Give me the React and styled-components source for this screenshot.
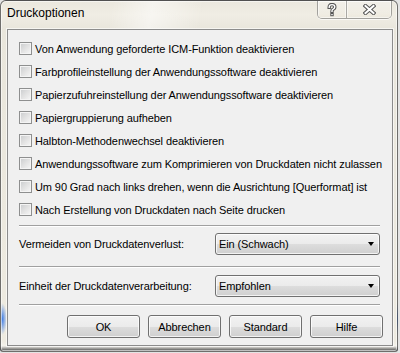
import React from "react";
import styled, { createGlobalStyle } from "styled-components";

const Global = createGlobalStyle`
  html, body { margin: 0; padding: 0; background: #e4e4e4; }
  body { font-family: "Liberation Sans", Arial, sans-serif; }
  * { box-sizing: border-box; }
`;

const Window = styled.div`
  width: 398px;
  height: 352px;
  border: 1px solid rgba(70, 70, 70, 0.75);
  border-radius: 6px 6px 3px 3px;
  padding: 0 4px 5px 6px;
  display: flex;
  flex-direction: column;
  background:
    radial-gradient(ellipse 5px 16px at 1px 318px, rgba(40, 110, 230, 0.9), rgba(40, 110, 230, 0) 100%),
    linear-gradient(to bottom, rgba(0,0,0,0) 340px, rgba(255,255,255,0.4) 345px, rgba(90,90,90,0.9) 349px, rgba(160,160,160,0.8) 352px),
    linear-gradient(100deg, rgba(255,255,255,0) 110px, rgba(255,255,255,0.5) 150px, rgba(255,255,255,0) 200px),
    linear-gradient(to bottom, #ebe8de 0px, #f0ede4 14px, #e9e6dc 28px, #eeebe1 100%);
  box-shadow: inset 0 0 0 1px rgba(255, 255, 255, 0.55);
`;

const TitleBar = styled.div`
  height: 28px;
  display: flex;
  align-items: flex-start;
  flex-shrink: 0;
`;

const Title = styled.div`
  padding-top: 5px;
  font-size: 12px;
  line-height: 15px;
  color: #000;
`;

const CaptionGroup = styled.div`
  margin-left: auto;
  margin-right: 1px;
  display: flex;
  height: 18px;
  border: 1px solid rgba(100, 100, 100, 0.55);
  border-top: none;
  border-radius: 0 0 5px 5px;
  overflow: hidden;
  box-shadow: 0 1px 0 rgba(255, 255, 255, 0.7);
`;

const CaptionButton = styled.div`
  width: ${(p) => p.$w}px;
  height: 100%;
  display: flex;
  align-items: center;
  justify-content: center;
  background: linear-gradient(to bottom, rgba(255,255,255,0.35), rgba(255,255,255,0.15) 50%, rgba(230,225,210,0.3) 100%);
  box-shadow: inset 0 0 0 1px rgba(255, 255, 255, 0.5);
  & + & { border-left: 1px solid rgba(100, 100, 100, 0.5); }
`;

const Client = styled.div`
  flex: 1;
  background: #f0f0f0;
  border: 1px solid #8c8c8c;
  box-shadow: 0 0 0 1px rgba(255, 255, 255, 0.6);
  display: flex;
  flex-direction: column;
  font-size: 11px;
  letter-spacing: -0.1px;
  color: #000;
`;

const CheckList = styled.div`
  padding: 7px 0 0 11px;
  display: flex;
  flex-direction: column;
`;

const CheckRow = styled.label`
  height: 23px;
  display: flex;
  align-items: center;
  gap: 3px;
  white-space: nowrap;
`;

const Box = styled.span`
  width: 13px;
  height: 13px;
  flex-shrink: 0;
  border: 1px solid #8e8f8f;
  background: linear-gradient(135deg, #c9cbcd 0%, #e2e2e2 50%, #f7f7f7 100%);
  box-shadow: inset 0 0 0 1px #f4f4f4;
`;

const Separator = styled.div`
  margin: ${(p) => p.$top}px 12px 0 11px;
  height: 2px;
  border-top: 1px solid #a0a0a0;
  border-bottom: 1px solid #ffffff;
`;

const OptionRow = styled.div`
  margin-top: ${(p) => p.$top}px;
  padding-left: 11px;
  display: flex;
  align-items: center;
`;

const OptionLabel = styled.span`
  width: 196px;
  white-space: nowrap;
`;

const Select = styled.div`
  width: 165px;
  height: 22px;
  border: 1px solid #707070;
  border-radius: 3px;
  padding: 0 5px 0 3px;
  display: flex;
  align-items: center;
  justify-content: space-between;
  background: linear-gradient(to bottom, #f2f2f2 0%, #ebebeb 50%, #dddddd 51%, #cfcfcf 100%);
  box-shadow: inset 0 0 0 1px rgba(255, 255, 255, 0.75);
`;

const Arrow = styled.span`
  width: 0;
  height: 0;
  border-left: 3.5px solid transparent;
  border-right: 3.5px solid transparent;
  border-top: 4px solid #000;
`;

const ButtonRow = styled.div`
  margin-top: 9px;
  padding-right: 9px;
  display: flex;
  justify-content: flex-end;
  gap: 8px;
`;

const Button = styled.button`
  width: 73px;
  height: 23px;
  margin: 0;
  padding: 0;
  border: 1px solid #707070;
  border-radius: 3px;
  background: linear-gradient(to bottom, #f2f2f2 0%, #ebebeb 50%, #dddddd 51%, #cfcfcf 100%);
  box-shadow: inset 0 0 0 1px rgba(255, 255, 255, 0.75);
  font-family: "Liberation Sans", Arial, sans-serif;
  font-size: 11px;
  letter-spacing: -0.1px;
  color: #000;
`;

const HelpGlyph = () => (
  <svg width="10" height="14" viewBox="0 0 10 14">
    <path d="M2.2 4.2 Q2.2 1.6 5 1.6 Q7.8 1.6 7.8 4.1 Q7.8 5.7 5.6 6.6 Q5 6.9 5 8.4" fill="none" stroke="#555" strokeWidth="3.4" strokeLinecap="square" />
    <rect x="3.3" y="10" width="3.4" height="3.2" fill="#555" />
    <path d="M2.2 4.2 Q2.2 1.6 5 1.6 Q7.8 1.6 7.8 4.1 Q7.8 5.7 5.6 6.6 Q5 6.9 5 8.4" fill="none" stroke="#fff" strokeWidth="1.4" strokeLinecap="square" />
    <rect x="4.3" y="11" width="1.4" height="1.2" fill="#fff" />
  </svg>
);

const CloseGlyph = () => (
  <svg width="13" height="11" viewBox="0 0 13 11">
    <path d="M2.5 2 L10.5 9 M10.5 2 L2.5 9" stroke="#555" strokeWidth="4" strokeLinecap="square" />
    <path d="M2.5 2 L10.5 9 M10.5 2 L2.5 9" stroke="#fff" strokeWidth="2" strokeLinecap="square" />
  </svg>
);

const checks = [
  "Von Anwendung geforderte ICM-Funktion deaktivieren",
  "Farbprofileinstellung der Anwendungssoftware deaktivieren",
  "Papierzufuhreinstellung der Anwendungssoftware deaktivieren",
  "Papiergruppierung aufheben",
  "Halbton-Methodenwechsel deaktivieren",
  "Anwendungssoftware zum Komprimieren von Druckdaten nicht zulassen",
  "Um 90 Grad nach links drehen, wenn die Ausrichtung [Querformat] ist",
  "Nach Erstellung von Druckdaten nach Seite drucken",
];

export default function App() {
  return (
    <>
      <Global />
      <Window>
        <TitleBar>
          <Title>Druckoptionen</Title>
          <CaptionGroup>
            <CaptionButton $w={28}>
              <HelpGlyph />
            </CaptionButton>
            <CaptionButton $w={45}>
              <CloseGlyph />
            </CaptionButton>
          </CaptionGroup>
        </TitleBar>
        <Client>
          <CheckList>
            {checks.map((c) => (
              <CheckRow key={c}>
                <Box />
                <span>{c}</span>
              </CheckRow>
            ))}
          </CheckList>
          <Separator $top={4} />
          <OptionRow $top={6}>
            <OptionLabel>Vermeiden von Druckdatenverlust:</OptionLabel>
            <Select>
              <span>Ein (Schwach)</span>
              <Arrow />
            </Select>
          </OptionRow>
          <Separator $top={11} />
          <OptionRow $top={7}>
            <OptionLabel>Einheit der Druckdatenverarbeitung:</OptionLabel>
            <Select>
              <span>Empfohlen</span>
              <Arrow />
            </Select>
          </OptionRow>
          <Separator $top={7} />
          <ButtonRow>
            <Button>OK</Button>
            <Button>Abbrechen</Button>
            <Button>Standard</Button>
            <Button>Hilfe</Button>
          </ButtonRow>
        </Client>
      </Window>
    </>
  );
}
